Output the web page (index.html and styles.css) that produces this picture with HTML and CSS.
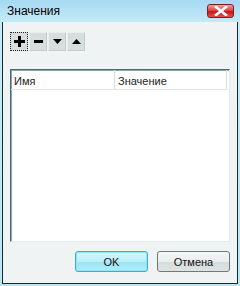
FILE: index.html
```html
<!DOCTYPE html>
<html>
<head>
<meta charset="UTF-8">
<title>Значения</title>
<link rel="stylesheet" href="styles.css">
</head>
<body>

<div class="window">
  <div class="titlebar">
    <span class="title">Значения</span>
    <button class="close">
      <svg width="14" height="10" viewBox="0 0 14 10">
        <path d="M2 1 L12 9 M12 1 L2 9" stroke="#fff" stroke-width="2.6" stroke-linecap="square"/>
      </svg>
    </button>
  </div>

  <div class="client">
    <div class="toolbar">
      <button class="tool focused">
        <svg width="11" height="11" viewBox="0 0 11 11"><path d="M4 0h3v4h4v3H7v4H4V7H0V4h4z" fill="#000"/></svg>
      </button>
      <button class="tool">
        <svg width="11" height="11" viewBox="0 0 11 11"><path d="M1 4h9v3H1z" fill="#000"/></svg>
      </button>
      <button class="tool">
        <svg width="11" height="11" viewBox="0 0 11 11"><path d="M1 3h9L5.5 8z" fill="#000"/></svg>
      </button>
      <button class="tool">
        <svg width="11" height="11" viewBox="0 0 11 11"><path d="M1 8h9L5.5 3z" fill="#000"/></svg>
      </button>
    </div>

    <div class="list">
      <div class="list-header">
        <div class="col col-name">Имя</div>
        <div class="col col-value">Значение</div>
      </div>
    </div>

    <div class="buttons">
      <button class="btn btn-ok">OK</button>
      <button class="btn">Отмена</button>
    </div>
  </div>
</div>

</body>
</html>
```

FILE: styles.css
```css
body {
  margin: 0;
  font-family: "DejaVu Sans", "Liberation Sans", sans-serif;
  font-size: 11px;
}
.window {
  width: 240px;
  height: 286px;
  box-sizing: border-box;
  padding: 0 2px 2px 2px;
  background: linear-gradient(to bottom, #a6d9f2, #c4ebf8 22px, #b8e4f4);
  display: flex;
  flex-direction: column;
}
.titlebar {
  height: 22px;
  flex: none;
  display: flex;
  align-items: center;
  justify-content: space-between;
  padding: 0 4px 0 5px;
}
.title {
  font-family: "Liberation Sans", sans-serif;
  font-size: 12px;
  color: #000;
}
.close {
  width: 27px;
  height: 14px;
  margin-top: -1px;
  padding: 0;
  border: 1px solid #7a2020;
  border-radius: 3px;
  background: linear-gradient(to bottom, #f0a0a0, #e04444 45%, #c81818 55%, #e05050);
  display: flex;
  align-items: center;
  justify-content: center;
}
.client {
  flex: 1;
  background: #f0f3f3;
  border: 1px solid #1a2a2a;
  border-top: none;
  display: flex;
  flex-direction: column;
  padding: 10px 7px 11px 7px;
}
.toolbar {
  display: flex;
  gap: 1px;
}
.tool {
  width: 18px;
  height: 19px;
  padding: 0;
  border: 1px solid;
  border-color: #e8eeee #c4cccc #c4cccc #e8eeee;
  background: #d6dede;
  display: flex;
  align-items: center;
  justify-content: center;
}
.tool.focused {
  border: 1px dotted #222;
}
.list {
  margin-top: 18px;
  height: 173px;
  box-sizing: border-box;
  background: #fff;
  border: 1px solid;
  border-color: #4a6c70 #e4eaea #e4eaea #4a6c70;
  box-shadow: inset 1px 1px 0 #8aa4a8;
}
.list-header {
  display: flex;
  height: 19px;
  border-bottom: 1px solid #e0e6e6;
  margin-right: 2px;
}
.col {
  padding: 5px 0 0 3px;
  font-family: "Liberation Sans", sans-serif;
  font-size: 11px;
  color: #222;
}
.col-name {
  width: 100px;
  border-right: 1px solid #d8dede;
}
.col-value {
  flex: 1;
  border-right: 1px solid #d8dede;
}
.buttons {
  margin-top: auto;
  display: flex;
  justify-content: flex-end;
  gap: 9px;
}
.btn {
  width: 73px;
  height: 21px;
  padding: 0;
  font-family: "Liberation Sans", sans-serif;
  font-size: 11px;
  color: #111;
  border: 1px solid #6e7a7a;
  border-radius: 3px;
  background: linear-gradient(to bottom, #f6f8f8, #e8eded 50%, #d6dcdc 51%, #dde2e2);
}
.btn-ok {
  border-color: #3aaed0;
  background: linear-gradient(to bottom, #d8f8fe, #b8eef8 50%, #9ae4f4 51%, #b0ecf8);
  box-shadow: inset 0 0 0 1px #8ee6f8;
}
```
